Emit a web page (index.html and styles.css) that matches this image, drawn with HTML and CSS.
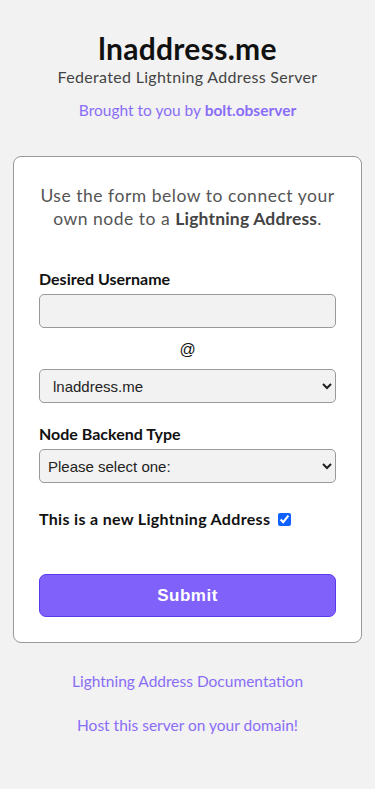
FILE: index.html
```html
<!DOCTYPE html>
<html>

<head>
	<meta charset="utf-8">
	<title>lnaddress.me</title>
	<meta name="viewport" content="width=device-width, initial-scale=1">
	<link rel="stylesheet" href="styles.css">
</head>

<body>
	<header class='intro'>
		<h1 class='intro__hed'>lnaddress.me</h1>
		<p class='intro__dek'>Federated Lightning Address Server</p>
		<p class='intro__by'>Brought to you by <a href='#'>bolt.observer</a></p>
	</header>

	<main class='card'>
		<p class='card__lede'>Use the form below to connect your own node to a <strong>Lightning Address</strong>.</p>
		<form class='form'>
			<label class='form__label' for='username'>Desired Username</label>
			<input class='form__input' id='username' type='text'>
			<p class='form__at'>@</p>
			<select class='form__select form__select--domain'>
				<option>lnaddress.me</option>
			</select>

			<label class='form__label form__label--gap' for='backend'>Node Backend Type</label>
			<select class='form__select' id='backend'>
				<option>Please select one:</option>
			</select>

			<label class='form__check'>This is a new Lightning Address <input type='checkbox' checked></label>

			<button class='form__submit' type='button'>Submit</button>
		</form>
	</main>

	<footer class='outro'>
		<a href='#'>Lightning Address Documentation</a>
		<a href='#'>Host this server on your domain!</a>
	</footer>
</body>

</html>
```

FILE: styles.css
```css
* {
	box-sizing: border-box;
}

html,
body {
	margin: 0;
	padding: 0;
	font-family: Lato, 'Noto Sans', sans-serif;
}

body {
	background: #f2f2f2;
	color: #111;
	padding: 29px 13px 40px;
}

p,
h1 {
	margin: 0;
}

a {
	color: #8a6df7;
	text-decoration: none;
}

.intro {
	text-align: center;
}

.intro__hed {
	font-size: 30px;
	line-height: 38px;
	font-weight: 700;
	letter-spacing: 0.01em;
}

.intro__dek {
	font-size: 16px;
	line-height: 20px;
	color: #444;
	letter-spacing: 0.02em;
}

.intro__by {
	margin-top: 13px;
	font-size: 15.5px;
	line-height: 20px;
	color: #8a6df7;
}

.intro__by a {
	font-weight: 700;
}

.card {
	margin-top: 36px;
	background: #fff;
	border: 1px solid #999;
	border-radius: 8px;
	padding: 27px 25px 25px;
}

.card__lede {
	text-align: center;
	font-size: 17.5px;
	line-height: 23px;
	color: #555;
	letter-spacing: 0.03em;
}

.card__lede strong {
	color: #444;
	font-weight: 700;
	letter-spacing: 0.01em;
}

.form {
	display: flex;
	flex-direction: column;
	margin-top: 38px;
}

.form__label {
	font-size: 16px;
	line-height: 22px;
	font-weight: 700;
	margin-bottom: 4px;
}

.form__label--gap {
	margin-top: 20px;
}

.form__input,
.form__select {
	height: 34px;
	width: 100%;
	background: #f2f2f2;
	border: 1px solid #999;
	border-radius: 5px;
	font-family: 'Liberation Sans', Arial, sans-serif;
	font-size: 15px;
	color: #222;
}

.form__select {
	padding: 0 5px 0 4px;
}

.form__select--domain {
	padding-left: 9px;
}

.form__at {
	text-align: center;
	font-family: 'Liberation Sans', Arial, sans-serif;
	font-size: 16px;
	line-height: 20px;
	margin: 12px 0 9px;
}

.form__check {
	margin-top: 25px;
	font-size: 16px;
	line-height: 22px;
	font-weight: 700;
	letter-spacing: 0.02em;
	display: flex;
	align-items: center;
	gap: 8px;
}

.form__check input {
	margin: 0;
	width: 13px;
	height: 13px;
	accent-color: #0f62fe;
}

.form__submit {
	margin-top: 44px;
	height: 43px;
	background: #8062fb;
	border: 1px solid #5a38f0;
	border-radius: 7px;
	color: #fff;
	font-family: 'Liberation Sans', Arial, sans-serif;
	font-size: 17px;
	font-weight: 700;
	letter-spacing: 0.03em;
}

.outro {
	display: flex;
	flex-direction: column;
	align-items: center;
	gap: 22px;
	margin-top: 27px;
	font-size: 15.5px;
	line-height: 22px;
}
```
